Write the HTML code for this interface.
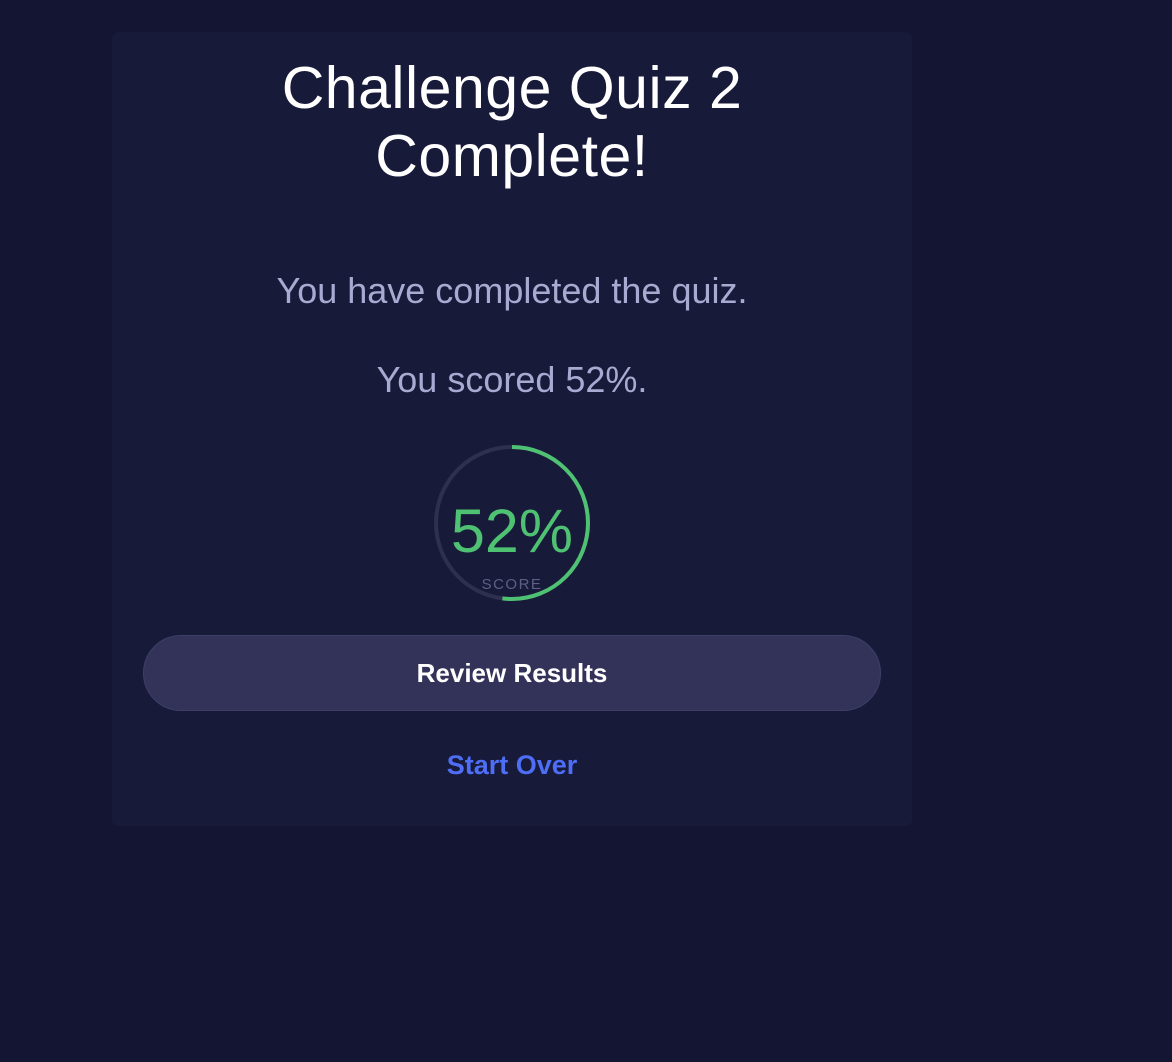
<!DOCTYPE html>
<html><head><style>
body{margin:0;width:1172px;height:1062px;background:#141533;font-family:"Liberation Sans",sans-serif;position:relative;overflow:hidden}
.card{position:absolute;left:112px;top:32px;width:800px;height:794px;background:#181a3a;border-radius:6px}
h1{position:absolute;left:0;width:800px;top:22px;margin:0;text-align:center;color:#fff;font-weight:400;font-size:59px;line-height:68px;letter-spacing:0.5px}
.p{position:absolute;left:0;width:800px;text-align:center;color:#a9a9d2;font-size:36px}
.btn{position:absolute;left:31px;top:603px;width:736px;height:74px;border-radius:38px;background:#33335a;border:1px solid #3e3f66;color:#fff;font-weight:bold;font-size:26px;line-height:74px;text-align:center}
.so{position:absolute;left:0;width:800px;top:718px;text-align:center;color:#4d6ef5;font-weight:bold;font-size:27px}
</style></head><body>
<div class="card">
<h1>Challenge Quiz 2<br>Complete!</h1>
<div class="p" style="top:238px">You have completed the quiz.</div>
<div class="p" style="top:327px">You scored 52%.</div>
<svg style="position:absolute;left:320px;top:411px" width="160" height="160" viewBox="0 0 160 160">
<circle cx="80" cy="80" r="76" fill="none" stroke="#2f3050" stroke-width="4"/>
<circle cx="80" cy="80" r="76" fill="none" stroke="#4fc172" stroke-width="4" stroke-dasharray="248.3 500" transform="rotate(-90 80 80)"/>
<text x="80" y="109" text-anchor="middle" fill="#4fc172" font-family="Liberation Sans" font-size="61">52%</text>
<text x="80" y="146" text-anchor="middle" fill="#5d5f85" font-family="Liberation Sans" font-size="15" letter-spacing="1.5">SCORE</text>
</svg>
<div class="btn">Review Results</div>
<div class="so">Start Over</div>
</div>
</body></html>
